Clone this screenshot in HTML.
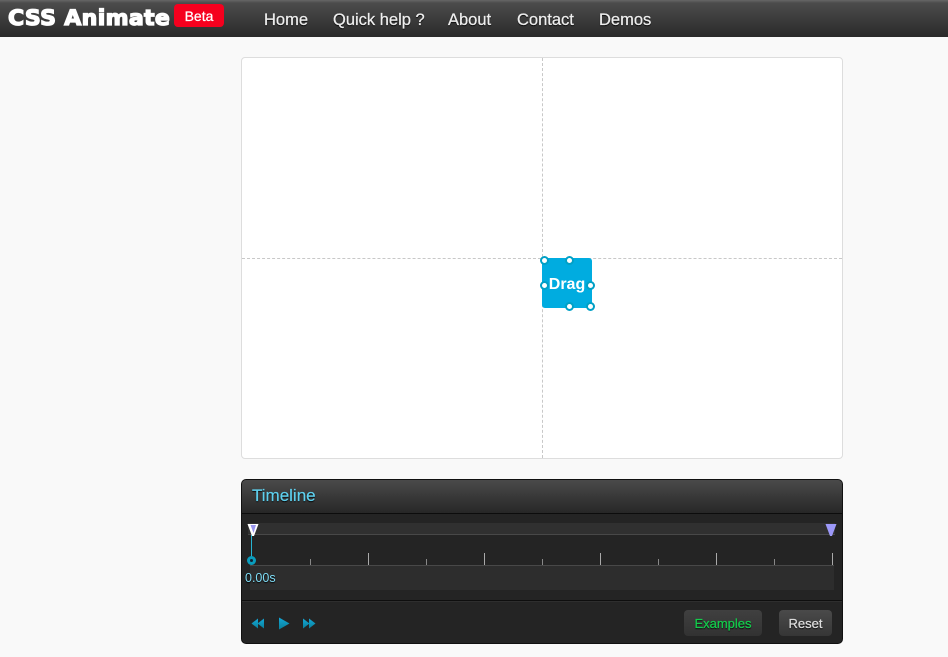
<!DOCTYPE html>
<html><head><meta charset="utf-8"><style>
html,body{margin:0;padding:0;width:948px;height:657px;overflow:hidden;background:#f9f9f9;font-family:"Liberation Sans",sans-serif}
.a{position:absolute}
.nav{position:absolute;top:10px;font-size:16.5px;line-height:20px;color:#eee;-webkit-text-stroke:.25px #eee;text-shadow:0 1px 1px #000;white-space:nowrap}
.tk{position:absolute;width:1px;background:#888}
.h{position:absolute;width:5px;height:5px;border:2px solid #00a0c6;border-radius:50%;background:#fff}
.btn{position:absolute;top:610px;height:26px;border-radius:4px;background:linear-gradient(#4a4a4a,#363636);font-size:13px;line-height:27px;text-align:center;text-shadow:0 1px 1px #000;-webkit-text-stroke:.25px currentColor}
</style></head><body>
<div class="a" style="left:0;top:0;width:948px;height:37px;background:linear-gradient(#666 0,#4c4c4c 3px,#2a2a2a 100%)"></div>
<div class="a" style="left:8px;top:6px;font-size:21px;line-height:24px;font-family:'DejaVu Sans',sans-serif;font-weight:bold;color:#fff;-webkit-text-stroke:1.3px #fff;white-space:nowrap;letter-spacing:.3px;transform-origin:left;transform:scaleX(1.05)">CSS Animate</div>
<div class="a" style="left:174px;top:4px;width:50px;height:23px;border-radius:4px;background:#f5001e;color:#fff;font-size:14px;line-height:24px;text-align:center;-webkit-text-stroke:.25px #fff">Beta</div>
<div class="nav" style="left:264px">Home</div>
<div class="nav" style="left:333px">Quick help ?</div>
<div class="nav" style="left:448px">About</div>
<div class="nav" style="left:517px">Contact</div>
<div class="nav" style="left:599px">Demos</div>

<div class="a" style="left:241px;top:57px;width:600px;height:400px;background:#fff;border:1px solid #ddd;border-radius:4px"></div>
<div class="a" style="left:542px;top:58px;height:400px;border-left:1px dashed #c8c8c8"></div>
<div class="a" style="left:242px;top:258px;width:600px;border-top:1px dashed #c8c8c8"></div>
<div class="a" style="left:542px;top:258px;width:50px;height:50px;background:#00ace0;border-radius:3px;color:#fff;font-weight:bold;font-size:16px;line-height:53px;text-align:center">Drag</div>
<div class="h" style="left:540px;top:256px"></div>
<div class="h" style="left:565px;top:256px"></div>
<div class="h" style="left:540px;top:281px"></div>
<div class="h" style="left:586px;top:281px"></div>
<div class="h" style="left:565px;top:302px"></div>
<div class="h" style="left:586px;top:302px"></div>

<div class="a" style="left:241px;top:479px;width:602px;height:165px;box-sizing:border-box;background:#242424;border:1px solid #111;border-radius:5px;overflow:hidden">
<div class="a" style="left:0;top:0;width:600px;height:33px;background:linear-gradient(#4a4a4a,#272727);border-bottom:1px solid #0c0c0c"></div>
</div>
<div class="a" style="left:252px;top:486px;font-size:17px;line-height:20px;color:#5fd0ee;-webkit-text-stroke:.2px #5fd0ee;text-shadow:0 1px 1px #000">Timeline</div>
<div class="a" style="left:248px;top:523px;width:587px;height:11px;background:#303030;border-bottom:1px solid #484848"></div>
<div class="a" style="left:250px;top:565px;width:584px;height:1px;background:#484848"></div>
<div class="a" style="left:250px;top:566px;width:584px;height:24px;background:#2d2d2d"></div>
<div class="a" style="left:242px;top:600px;width:600px;height:1px;background:#0e0e0e"></div>
<div class="a" style="left:242px;top:601px;width:600px;height:1px;background:#2e2e2e"></div>

<div class="tk" style="left:310px;top:559px;height:6px"></div>
<div class="tk" style="left:368px;top:553px;height:12px;background:#aaa"></div>
<div class="tk" style="left:426px;top:559px;height:6px"></div>
<div class="tk" style="left:484px;top:553px;height:12px;background:#aaa"></div>
<div class="tk" style="left:542px;top:559px;height:6px"></div>
<div class="tk" style="left:600px;top:553px;height:12px;background:#aaa"></div>
<div class="tk" style="left:658px;top:559px;height:6px"></div>
<div class="tk" style="left:716px;top:553px;height:12px;background:#aaa"></div>
<div class="tk" style="left:774px;top:559px;height:6px"></div>
<div class="tk" style="left:832px;top:553px;height:12px;background:#aaa"></div>

<div class="a" style="left:251px;top:535px;width:1px;height:22px;background:#27b4d2"></div>
<div class="a" style="left:247px;top:556px;width:3px;height:3px;border:3px solid #0a9dbd;border-radius:50%;background:#123"></div>
<svg class="a" style="left:246px;top:522px" width="14" height="15"><path d="M1.500 2H12.500L8 14H6Z" fill="#fff"/><path d="M4.500 3H10L7.500 11Z" fill="#9a96f0"/></svg>
<svg class="a" style="left:824px;top:522px" width="14" height="15"><path d="M1.500 2H12.500L8 14H6Z" fill="#9c98f8"/></svg>
<div class="a" style="left:245px;top:570px;font-size:12.500px;line-height:16px;color:#7fdcf5;text-shadow:0 1px 1px #000">0.00s</div>

<svg class="a" style="left:250px;top:616px" width="70" height="15">
<defs><linearGradient id="g" x1="0" y1="0" x2="0" y2="1"><stop offset="0" stop-color="#14a8d8"/><stop offset="1" stop-color="#0a7f9a"/></linearGradient></defs>
<path d="M1.500 7.500L8 2.500V12.500Z M7.500 7.500L14 2.500V12.500Z" fill="url(#g)"/>
<path d="M29 1.500L39.500 7.500L29 13.500Z" fill="url(#g)"/>
<path d="M53 2.500L59.500 7.500L53 12.500Z M59 2.500L65.500 7.500L59 12.500Z" fill="url(#g)"/>
</svg>

<div class="btn" style="left:684px;width:78px;color:#14cc4c;background:linear-gradient(#404040,#323232)">Examples</div>
<div class="btn" style="left:779px;width:53px;color:#ddd">Reset</div>
</body></html>
